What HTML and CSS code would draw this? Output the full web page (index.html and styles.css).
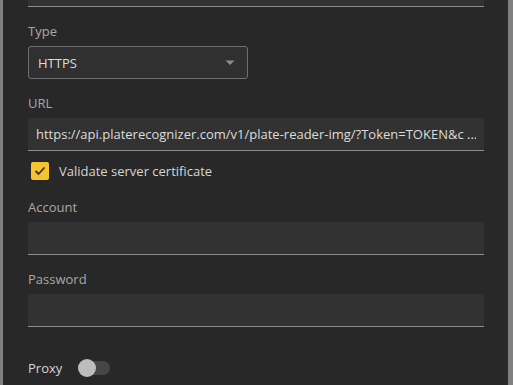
FILE: index.html
```html
<!DOCTYPE html>
<html lang="en">

<head>
  <meta charset="UTF-8">
  <meta name="viewport" content="width=device-width, initial-scale=1.0">
  <title>Webhook settings</title>
  <link rel="stylesheet" href="styles.css">
</head>

<body>
  <div class="panel">
    <div class="input"></div>

    <div class="field">
      <label class="field-label">Type</label>
      <div class="select">
        <span>HTTPS</span>
        <svg class="caret" width="10" height="6" viewBox="0 0 10 6"><path d="M0.5 0.5 H9.5 L5 5 Z" fill="#8c8c8c"/></svg>
      </div>
    </div>

    <div class="field">
      <label class="field-label">URL</label>
      <div class="input"><span class="value">https://api.platerecognizer.com/v1/plate-reader-img/?Token=TOKEN&amp;c ...</span></div>
    </div>

    <div class="check-row">
      <span class="checkbox">
        <svg width="12" height="10" viewBox="0 0 12 10"><path d="M1.5 5 L4.5 8 L10.5 1.5" fill="none" stroke="#3b3220" stroke-width="1.8"/></svg>
      </span>
      <span class="check-label">Validate server certificate</span>
    </div>

    <div class="field field-account">
      <label class="field-label">Account</label>
      <div class="input"></div>
    </div>

    <div class="field">
      <label class="field-label">Password</label>
      <div class="input"></div>
    </div>

    <div class="toggle-row">
      <span class="toggle-label">Proxy</span>
      <span class="toggle"><span class="knob"></span></span>
    </div>
  </div>
</body>

</html>
```

FILE: styles.css
```css
body {
  margin: 0;
  background-color: #808080;
  font-family: "Open Sans", "Noto Sans", sans-serif;
  font-size: 13px;
  overflow: hidden;
}

.panel {
  margin: -26px 5px 0 3px;
  padding: 0 24px 9px 25px;
  background-color: #282828;
}

.input {
  height: 32px;
  background-color: #323232;
  border-bottom: 1px solid #8e8e8e;
  display: flex;
  align-items: center;
  padding: 0 8px;
}

.value {
  color: #dcdcdc;
  white-space: nowrap;
  overflow: hidden;
}

.field {
  margin-top: 15px;
}

.field-account {
  margin-top: 17px;
}

.field-label {
  display: block;
  line-height: 18px;
  margin-bottom: 6px;
  color: #a8a8a8;
}

.select {
  width: 197px;
  height: 31px;
  border: 1px solid #6e6e6e;
  border-radius: 3px;
  background-color: #303030;
  display: flex;
  align-items: center;
  justify-content: space-between;
  padding: 0 12px 0 9px;
  color: #dcdcdc;
}

.check-row {
  margin-top: 10px;
  height: 20px;
  display: flex;
  align-items: center;
  padding-left: 3px;
}

.checkbox {
  width: 18px;
  height: 18px;
  border-radius: 2px;
  background-color: #f6c431;
  display: flex;
  align-items: center;
  justify-content: center;
}

.check-label {
  margin-left: 10px;
  color: #d6d6d6;
}

.toggle-row {
  margin-top: 33px;
  height: 16px;
  display: flex;
  align-items: center;
}

.toggle-label {
  color: #d6d6d6;
}

.toggle {
  position: relative;
  margin-left: 16px;
  width: 32px;
  height: 14px;
  border-radius: 7px;
  background-color: #464646;
}

.knob {
  position: absolute;
  left: 0;
  top: -2px;
  width: 18px;
  height: 18px;
  border-radius: 50%;
  background-color: #bdbdbd;
}
```
